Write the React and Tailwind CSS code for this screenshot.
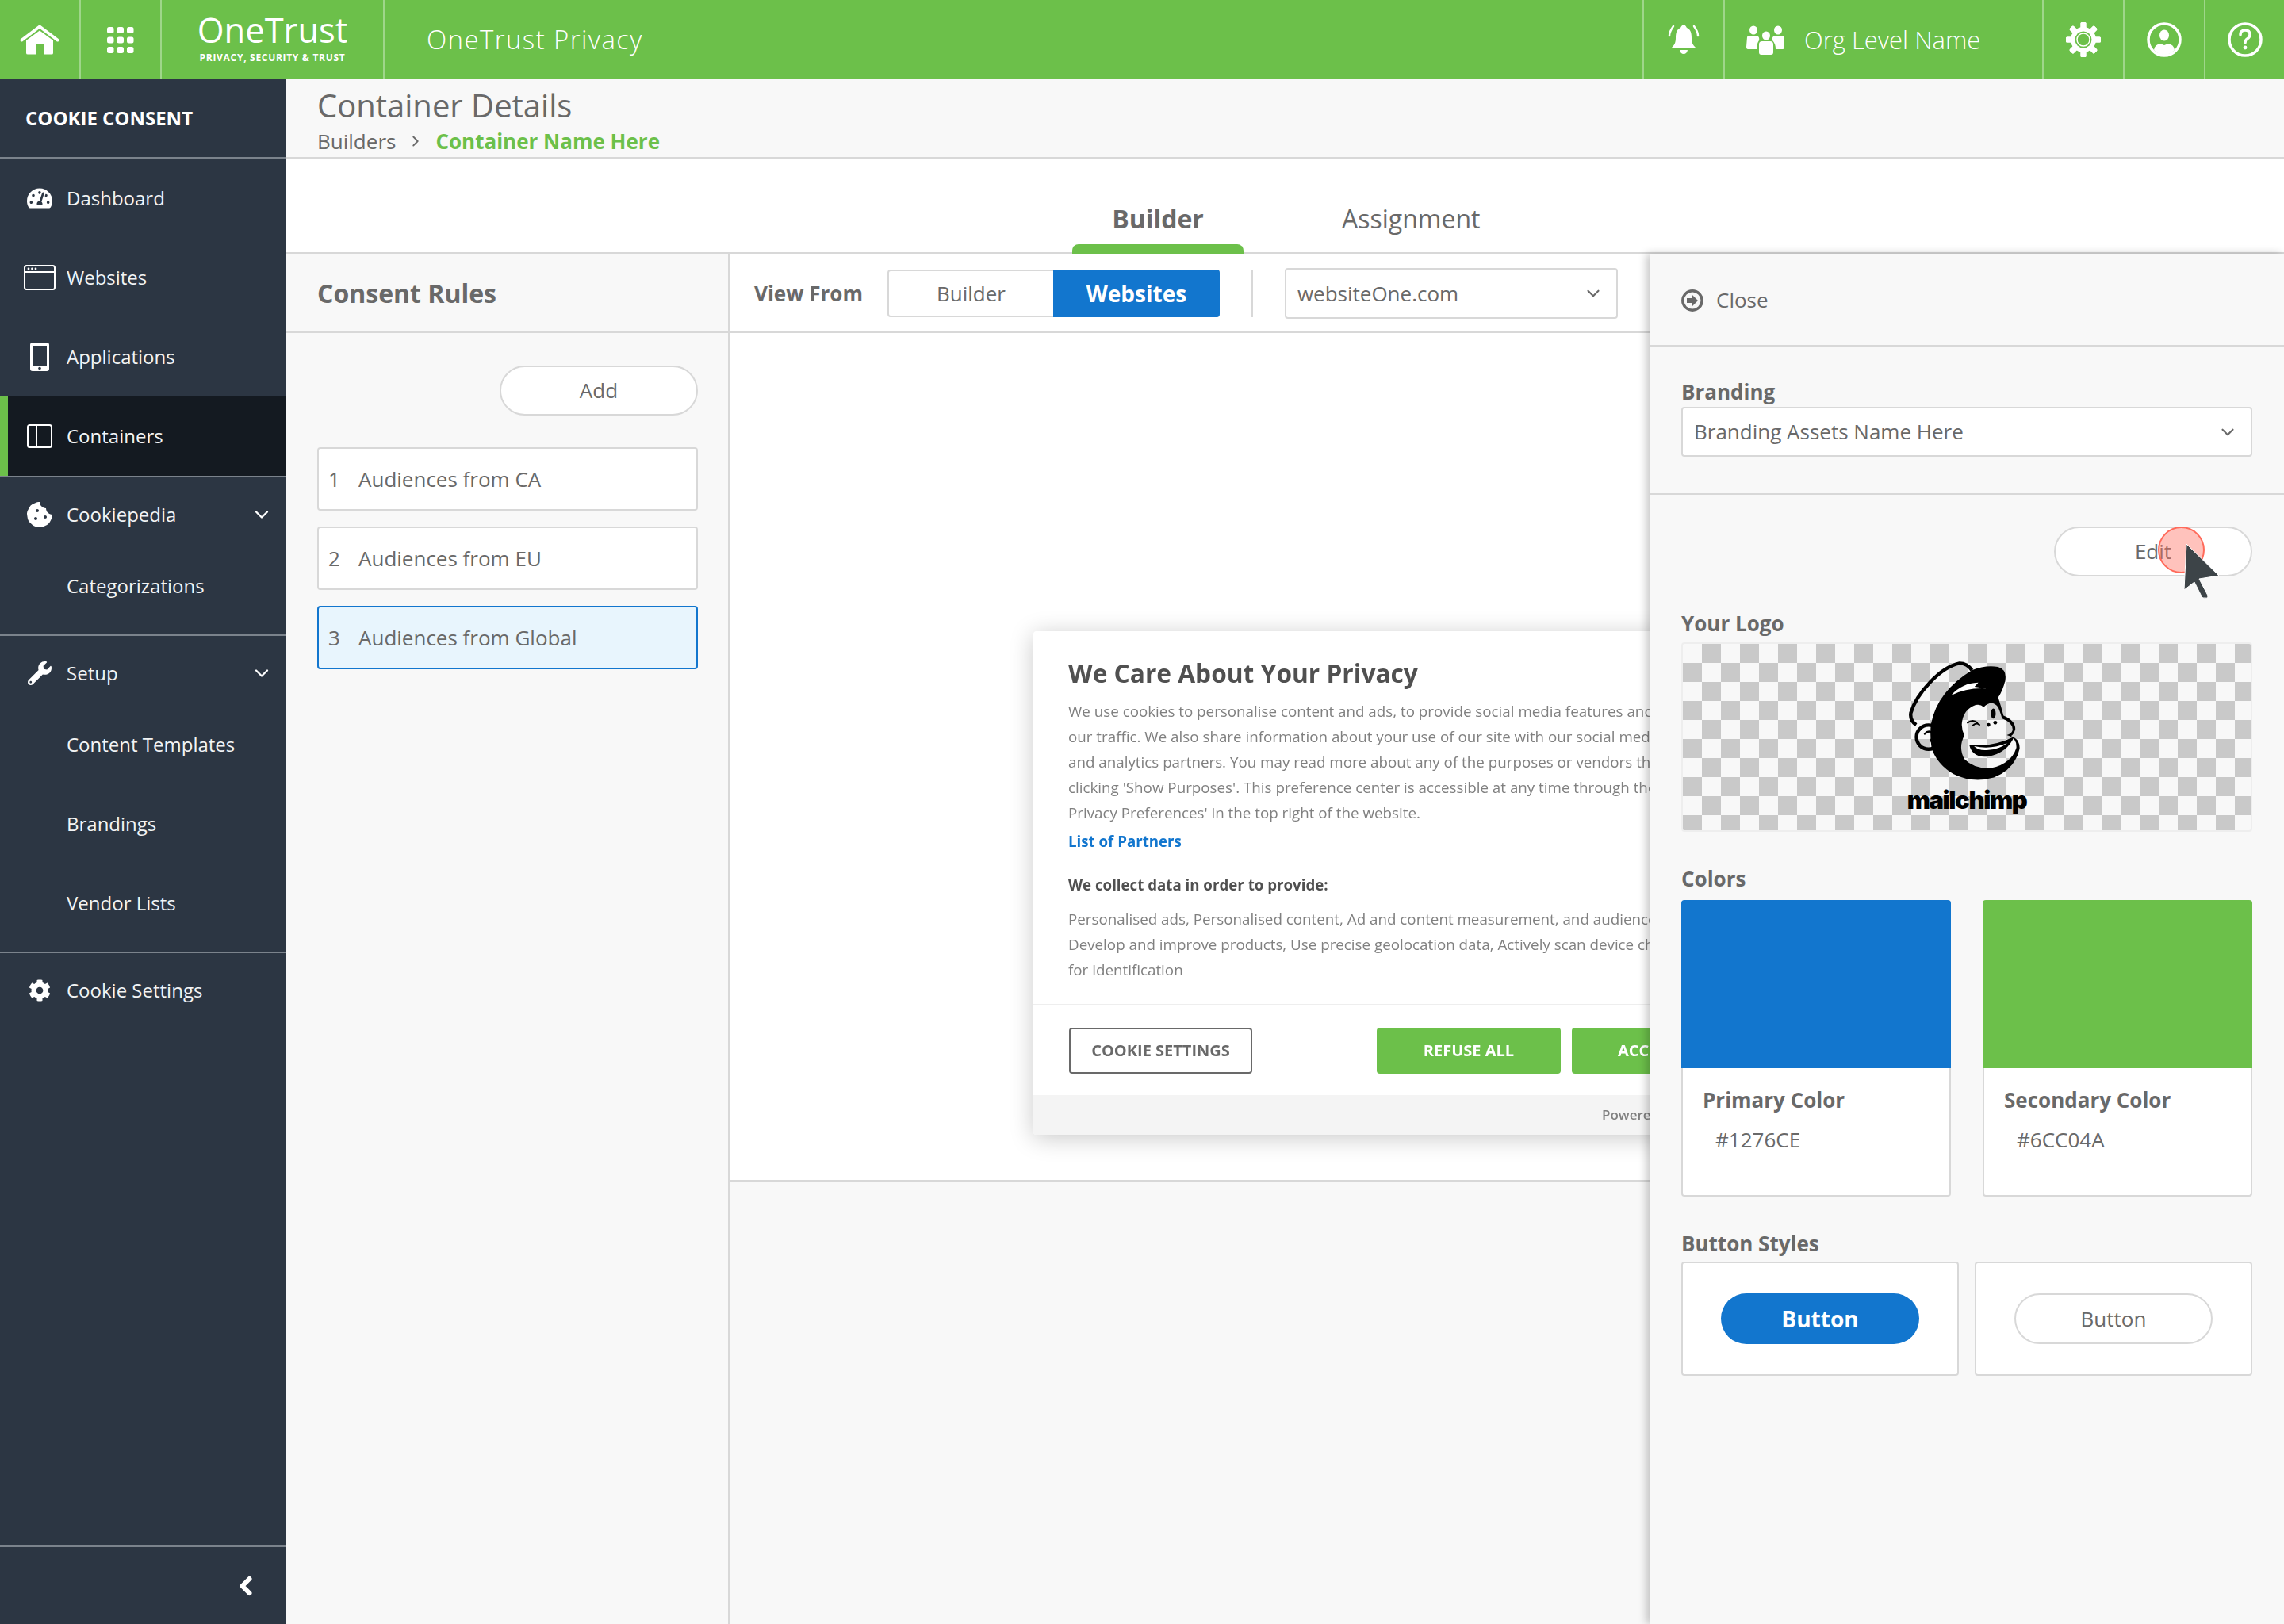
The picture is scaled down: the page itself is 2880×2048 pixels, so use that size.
import React from 'react';
import { ChevronDown, ChevronLeft, ChevronRight } from 'lucide-react';
import { FaTachometerAlt, FaCookieBite, FaWrench, FaCog } from 'react-icons/fa';

const HomeIcon = () => (
  <svg width="50" height="38" viewBox="0 0 50 38" fill="none">
    <path d="M2.5 19.5 L25 2.5 L47.5 19.5" stroke="white" strokeWidth="4" strokeLinecap="round" strokeLinejoin="round" />
    <path d="M8 20 L25 7.5 L42 20 V36 Q42 37.5 40 37.5 H31 V25 H20 V37.5 H10 Q8 37.5 8 36 Z" fill="white" />
  </svg>
);

const GridIcon = () => (
  <svg width="34" height="33" viewBox="0 0 34 33" fill="white">
    {[0, 12.5, 25].map((y) =>
      [0, 12.5, 25].map((x) => <rect key={`${x}-${y}`} x={x} y={y} width="8.5" height="8" rx="2.5" />)
    )}
  </svg>
);

const BellIcon = () => (
  <svg width="42" height="40" viewBox="0 0 42 40" fill="none">
    <path d="M21 1 C24 2 24 4 25 5 C30 7 31 12 31 18 C31 24 33 27 36 30 H6 C9 27 11 24 11 18 C11 12 12 7 17 5 C18 4 18 2 21 1 Z" fill="white" />
    <path d="M16 33 H26 Q25 38 21 38 Q17 38 16 33 Z" fill="white" />
    <path d="M8 3 Q3 10 3 15 M34 3 Q39 10 39 15" stroke="white" strokeWidth="2.5" strokeLinecap="round" />
  </svg>
);

const UsersIcon = () => (
  <svg width="50" height="37" viewBox="0 0 50 37" fill="white">
    <ellipse cx="10" cy="6" rx="5" ry="5.5" />
    <ellipse cx="41" cy="6" rx="5" ry="5.5" />
    <ellipse cx="26" cy="13" rx="5" ry="5.5" />
    <path d="M2 15 Q2 13 6 13 H15 Q18 15 17 19 Q14 23 14 30 H3 Q1 30 1 27 Z" />
    <path d="M49 15 Q49 13 45 13 H36 Q33 15 34 19 Q38 23 38 30 H47 Q49 30 49 27 Z" />
    <path d="M17 24 Q17 20 21 20 H31 Q35 20 35 24 V34 Q35 37 32 37 H20 Q17 37 17 34 Z" />
  </svg>
);

const GearIcon = () => (
  <svg width="44" height="44" viewBox="0 0 44 44">
    {[0, 45, 90, 135, 180, 225, 270, 315].map((a) => (
      <rect key={a} x="18.5" y="0" width="7" height="44" rx="1.5" fill="white" transform={`rotate(${a} 22 22)`} />
    ))}
    <circle cx="22" cy="22" r="16" fill="white" />
    <circle cx="22" cy="22" r="10.5" fill="#6CC04A" />
    <circle cx="22" cy="22" r="8" fill="none" stroke="white" strokeWidth="1.5" />
  </svg>
);

const UserCircleIcon = () => (
  <svg width="44" height="44" viewBox="0 0 44 44" fill="none">
    <circle cx="22" cy="22" r="20" stroke="white" strokeWidth="3.5" />
    <ellipse cx="22" cy="16.5" rx="6" ry="7" fill="white" />
    <path d="M9 35 Q10 28 17 27 L22 29 L27 27 Q34 28 35 35 Q29 41 22 41 Q15 41 9 35 Z" fill="white" />
  </svg>
);

const HelpIcon = () => (
  <svg width="44" height="44" viewBox="0 0 44 44" fill="none">
    <circle cx="22" cy="22" r="20" stroke="white" strokeWidth="3.5" />
    <path d="M16 16 Q16 10 22 10 Q28 10 28 15.5 Q28 19 24.5 21 Q22 22.5 22 26" stroke="white" strokeWidth="3.5" strokeLinecap="round" />
    <circle cx="22" cy="32" r="2.4" fill="white" />
  </svg>
);

const WindowIcon = () => (
  <svg width="40" height="32" viewBox="0 0 40 32" fill="none">
    <rect x="1" y="1" width="38" height="30" rx="2.5" stroke="white" strokeWidth="2" />
    <path d="M1 9 H39" stroke="white" strokeWidth="2" />
    <circle cx="6" cy="5" r="1.4" fill="white" />
    <circle cx="10.5" cy="5" r="1.4" fill="white" />
    <circle cx="15" cy="5" r="1.4" fill="white" />
  </svg>
);

const TabletIcon = () => (
  <svg width="24" height="36" viewBox="0 0 24 36">
    <rect width="24" height="36" rx="3" fill="white" />
    <rect x="3" y="4" width="18" height="25" fill="#2C3643" />
    <circle cx="12" cy="32.5" r="1.8" fill="#2C3643" />
  </svg>
);

const ColumnsIcon = () => (
  <svg width="32" height="30" viewBox="0 0 32 30" fill="none">
    <rect x="1" y="1" width="30" height="28" rx="2.5" stroke="white" strokeWidth="2" />
    <path d="M12 1 V29" stroke="white" strokeWidth="2" />
  </svg>
);

const CloseIcon = () => (
  <svg width="28" height="28" viewBox="0 0 28 28">
    <circle cx="14" cy="14" r="12.2" fill="none" stroke="#696969" strokeWidth="3.5" />
    <path d="M7 11 H13.5 V6.5 L21 14 L13.5 21.5 V17 H7 Z" fill="#696969" />
  </svg>
);

// rough trace of the chimp head, face and brim stay see-through
const ChimpLogo = () => (
  <svg width="142" height="152" viewBox="130 66 420 450">
    <path d="M160 306 Q136 290 140 262 C160 190 250 90 322 76 Q350 76 368 102" fill="none" stroke="black" strokeWidth="13" strokeLinejoin="round" />
    <path
      fillRule="evenodd"
      fill="black"
      d="M368 102 Q420 82 465 90 Q500 100 492 142 Q484 176 466 204 Q478 240 486 272 Q530 290 530 322 Q526 340 514 348 Q548 360 546 395 Q530 470 450 503 Q370 525 300 490 Q240 455 218 395 Q210 345 216 300 Q240 180 368 102 Z
      M332 290 Q340 248 382 232 Q400 228 412 240 Q442 210 466 240 Q478 270 480 282 Q522 298 520 326 Q516 340 498 344 Q536 352 534 392 Q516 448 446 466 Q380 474 340 434 Q316 390 340 346 Q326 316 332 290 Z"
    />
    <path d="M290 196 Q330 150 392 148 L378 164 L422 170 Q350 166 290 196 Z" fill="white" />
    <circle cx="206" cy="352" r="45" fill="none" stroke="black" strokeWidth="13" />
    <path d="M192 340 Q208 322 222 340 Q228 352 216 362 Q214 374 238 372" fill="none" stroke="black" strokeWidth="7" strokeLinecap="round" />
    <ellipse cx="448" cy="264" rx="9" ry="19" fill="black" />
    <path d="M352 298 Q372 284 388 298 M372 308 Q384 296 396 306" fill="none" stroke="black" strokeWidth="6" strokeLinecap="round" />
    <circle cx="430" cy="306" r="7" fill="black" />
    <circle cx="455" cy="298" r="7" fill="black" />
    <path d="M358 380 Q440 392 526 350 Q500 410 430 424 Q370 432 358 380 Z" fill="black" />
    <path d="M376 386 Q440 400 500 374 Q470 398 430 400 Q392 404 376 386 Z" fill="white" />
  </svg>
);

const navTop = [
  { label: 'Dashboard', icon: <FaTachometerAlt size={32} color="white" /> },
  { label: 'Websites', icon: <WindowIcon /> },
  { label: 'Applications', icon: <TabletIcon /> },
];

function NavRow({ icon, label, chevron, active, compact }) {
  return (
    <div className={`flex items-center pr-4 ${compact ? 'h-[94px]' : 'h-[100px]'} ${active ? 'bg-[#141A21] border-l-[10px] border-[#6CC04A]' : ''}`}>
      <div className={`flex justify-center shrink-0 w-[68px] ${active ? 'ml-[6px]' : 'ml-4'}`}>{icon}</div>
      <span className="text-[24px] text-[#f2f4f5]">{label}</span>
      {chevron && <ChevronDown size={28} color="white" strokeWidth={2} className="ml-auto" />}
    </div>
  );
}

function SubItems({ items }) {
  return (
    <div className="flex flex-col gap-[60px] pt-[23px] pb-[41px] pl-[84px]">
      {items.map((item) => (
        <div key={item} className="h-10 leading-10 text-[24px] text-[#f2f4f5]">{item}</div>
      ))}
    </div>
  );
}

function Sidebar() {
  return (
    <aside className="w-[360px] shrink-0 bg-[#2C3643] flex flex-col">
      <div className="h-[100px] shrink-0 flex items-center pl-8 border-b-2 border-[#7b838c] text-[24px] font-bold text-white">COOKIE CONSENT</div>
      {navTop.map((n) => (
        <NavRow key={n.label} icon={n.icon} label={n.label} />
      ))}
      <NavRow active icon={<ColumnsIcon />} label="Containers" />
      <div className="border-t-2 border-[#7b838c]">
        <NavRow compact chevron icon={<FaCookieBite size={32} color="white" />} label="Cookiepedia" />
        <SubItems items={['Categorizations']} />
      </div>
      <div className="border-t-2 border-[#7b838c]">
        <NavRow compact chevron icon={<FaWrench size={30} color="white" />} label="Setup" />
        <SubItems items={['Content Templates', 'Brandings', 'Vendor Lists']} />
      </div>
      <div className="border-t-2 border-[#7b838c]">
        <NavRow compact icon={<FaCog size={28} color="white" />} label="Cookie Settings" />
      </div>
      <div className="mt-auto h-[99px] border-t-2 border-[#7b838c] flex items-center justify-end pr-[32px]">
        <ChevronLeft size={36} color="white" strokeWidth={4} />
      </div>
    </aside>
  );
}

function TopBar() {
  return (
    <header className="h-[100px] shrink-0 bg-[#6CC04A] flex items-stretch text-white">
      <div className="w-[102px] border-r-2 border-[#9fd68a] flex items-center justify-center"><HomeIcon /></div>
      <div className="w-[102px] border-r-2 border-[#9fd68a] flex items-center justify-center"><GridIcon /></div>
      <div className="w-[281px] border-r-2 border-[#9fd68a] flex flex-col items-center pt-[13px]">
        <div className="text-[43.5px] leading-[50px]">OneTrust</div>
        <div className="text-[12px] leading-4 font-bold mt-[2px] tracking-[0.7px]">PRIVACY, SECURITY &amp; TRUST</div>
      </div>
      <div className="pl-[53px] flex items-center text-[33px] tracking-[1.4px] font-light">OneTrust Privacy</div>
      <div className="ml-auto w-[102px] border-l-2 border-[#9fd68a] flex items-center justify-center"><BellIcon /></div>
      <div className="w-[402px] border-l-2 border-[#9fd68a] flex items-center pl-[26px]">
        <UsersIcon />
        <span className="ml-[24px] text-[31px] font-light">Org Level Name</span>
      </div>
      <div className="w-[102px] border-l-2 border-[#9fd68a] flex items-center justify-center"><GearIcon /></div>
      <div className="w-[102px] border-l-2 border-[#9fd68a] flex items-center justify-center"><UserCircleIcon /></div>
      <div className="w-[101px] border-l-2 border-[#9fd68a] flex items-center justify-center"><HelpIcon /></div>
    </header>
  );
}

function RuleRow({ n, label, selected }) {
  return (
    <div className={`h-[80px] rounded border-2 flex items-center pl-3 text-[26px] text-[#696969] ${selected ? 'bg-[#E8F5FD] border-[#1276CE]' : 'bg-white border-[#d8d8d8]'}`}>
      <span className="w-[38px]">{n}</span>
      <span>{label}</span>
    </div>
  );
}

function CookieBanner() {
  const intro = [
    'We use cookies to personalise content and ads, to provide social media features and',
    'our traffic. We also share information about your use of our site with our social media',
    'and analytics partners. You may read more about any of the purposes or vendors that',
    "clicking 'Show Purposes'. This preference center is accessible at any time through the",
    "Privacy Preferences' in the top right of the website.",
  ];
  const purposes = [
    'Personalised ads, Personalised content, Ad and content measurement, and audience',
    'Develop and improve products, Use precise geolocation data, Actively scan device characteristics',
    'for identification',
  ];
  return (
    <div className="w-[1000px] h-[635px] shrink-0 bg-white rounded shadow-[0_4px_30px_rgba(0,0,0,0.22)] flex flex-col overflow-hidden blur-[0.4px]">
      <div className="pl-11 pt-[32px] h-[471px] border-b border-[#eeeeee]">
        <div className="text-[31.7px] leading-[42px] font-bold text-[#505050] whitespace-nowrap">We Care About Your Privacy</div>
        <div className="mt-[11px] text-[18.8px] leading-[32px] text-[#808080] whitespace-nowrap">
          {intro.map((l) => <div key={l}>{l}</div>)}
        </div>
        <div className="mt-[4px] text-[18.7px] leading-[32px] font-bold text-[#1276CE]">List of Partners</div>
        <div className="mt-[23px] text-[18.7px] leading-[32px] font-bold text-[#505050]">We collect data in order to provide:</div>
        <div className="mt-[11px] text-[18.8px] leading-[32px] text-[#808080] whitespace-nowrap">
          {purposes.map((l) => <div key={l}>{l}</div>)}
        </div>
      </div>
      <div className="flex-1 flex items-center pl-[45px] pt-[2px] gap-[14px]">
        <div className="w-[231px] h-[58px] rounded border-2 border-[#696969] flex items-center justify-center text-[20px] font-bold text-[#696969] mr-[143px]">COOKIE SETTINGS</div>
        <div className="w-[232px] h-[58px] rounded bg-[#6CC04A] flex items-center justify-center text-[20px] font-bold text-white">REFUSE ALL</div>
        <div className="w-[232px] h-[58px] rounded bg-[#6CC04A] flex items-center justify-center text-[20px] font-bold text-white">ACCEPT ALL</div>
      </div>
      <div className="h-[50px] shrink-0 bg-[#f4f4f4] flex items-center pl-[717px] text-[17px] font-semibold text-[#808080] whitespace-nowrap">Powered by OneTrust</div>
    </div>
  );
}

function SelectBox({ value, className }) {
  return (
    <div className={`bg-white border-2 border-[#d8d8d8] rounded flex items-center justify-between pl-[14px] pr-[16px] text-[26px] text-[#696969] ${className}`}>
      <span>{value}</span>
      <ChevronDown size={26} color="#696969" strokeWidth={2} />
    </div>
  );
}

function ColorCard({ name, hex, swatch }) {
  return (
    <div className="w-[340px] h-[374px] flex flex-col">
      <div className={`h-[212px] shrink-0 rounded-t ${swatch}`}></div>
      <div className="flex-1 bg-white border-2 border-t-0 border-[#d8d8d8] rounded-b">
        <div className="pl-[25px] pt-[22px] text-[26px] leading-9 font-bold text-[#696969]">{name}</div>
        <div className="pl-[41px] pt-[14px] text-[26px] leading-9 text-[#696969]">{hex}</div>
      </div>
    </div>
  );
}

function BrandingPanel() {
  return (
    <aside className="w-[800px] shrink-0 bg-[#F8F8F8] shadow-[-4px_0_10px_rgba(0,0,0,0.22)] relative z-10">
      <div className="h-[117px] border-b-2 border-[#d8d8d8] flex items-center pl-10 pt-[2px] gap-[16px] text-[26px] text-[#696969]">
        <CloseIcon />
        <span>Close</span>
      </div>
      <div className="h-[187px] border-b-2 border-[#d8d8d8] px-10 pt-[39px]">
        <div className="text-[26px] leading-9 font-bold text-[#696969]">Branding</div>
        <SelectBox value="Branding Assets Name Here" className="h-[63px] mt-[1px]" />
      </div>
      <div className="px-10 pt-[40px]">
        <div className="flex justify-end">
          <div className="relative w-[250px] h-[63px] rounded-full bg-white border-2 border-[#d8d8d8] flex items-center justify-center text-[26px] text-[#696969]">
            Edit
            <div className="absolute left-[129px] -top-[2px] w-[59px] h-[59px] rounded-full bg-[rgba(255,110,95,0.42)] border-2 border-[#ff6a5a]"></div>
            <svg className="absolute left-[161px] top-[18px]" width="48" height="72" viewBox="0 0 48 72">
              <path d="M4 2 L45 42 L20 46 L31 67 Q31 71 28 70 Q24 71 23 68 L14 50 L1 60 Z" fill="#3D4448" stroke="white" strokeWidth="1" strokeLinejoin="round" />
            </svg>
          </div>
        </div>
        <div className="mt-[41px] text-[26px] leading-9 font-bold text-[#696969]">Your Logo</div>
        <div className="mt-[6px] h-[239px] rounded border-2 border-[#eeeeee] bg-[repeating-conic-gradient(#c9c9c9_0_25%,#f8f8f8_0_50%)] bg-size-[48px_48px] flex flex-col items-center pt-[21px]">
          <div className="mr-[6px] h-[152px]"><ChimpLogo /></div>
          <div className="mt-[6px] text-[31px] leading-[36px] font-black tracking-[-1.4px] text-black font-['Inter',sans-serif]">mailchimp</div>
        </div>
        <div className="mt-[41px] text-[26px] leading-9 font-bold text-[#696969]">Colors</div>
        <div className="mt-[9px] flex justify-between">
          <ColorCard name="Primary Color" hex="#1276CE" swatch="bg-[#1276CE]" />
          <ColorCard name="Secondary Color" hex="#6CC04A" swatch="bg-[#6CC04A]" />
        </div>
        <div className="mt-[41px] text-[26px] leading-9 font-bold text-[#696969]">Button Styles</div>
        <div className="mt-[5px] flex justify-between">
          <div className="w-[350px] h-[144px] bg-white border-2 border-[#d8d8d8] rounded flex items-center justify-center">
            <div className="w-[250px] h-[64px] rounded-full bg-[#1276CE] flex items-center justify-center text-[28px] font-bold text-white">Button</div>
          </div>
          <div className="w-[350px] h-[144px] bg-white border-2 border-[#d8d8d8] rounded flex items-center justify-center">
            <div className="w-[250px] h-[64px] rounded-full border-2 border-[#d8d8d8] flex items-center justify-center text-[26px] text-[#696969]">Button</div>
          </div>
        </div>
      </div>
    </aside>
  );
}

export default function App() {
  return (
    <div className="h-screen w-screen overflow-hidden flex flex-col font-['Open_Sans',sans-serif]">
      <TopBar />
      <div className="flex-1 flex min-h-0">
        <Sidebar />
        <main className="flex-1 flex flex-col min-w-0 bg-[#F8F8F8]">
          <div className="h-[100px] shrink-0 bg-[#F8F8F8] border-b-2 border-[#d8d8d8] pl-10">
            <div className="text-[40px] leading-[50px] text-[#696969] pt-[8px] h-[58px]">Container Details</div>
            <div className="flex items-center text-[26px] leading-8 text-[#696969] mt-[4px]">
              <span>Builders</span>
              <ChevronRight size={22} className="mx-[14px]" />
              <span className="font-bold text-[#6CC04A]">Container Name Here</span>
            </div>
          </div>
          <div className="h-[120px] shrink-0 bg-white border-b-2 border-[#d8d8d8] flex items-stretch pl-[992px]">
            <div className="w-[216px] flex flex-col justify-end items-center -mb-[2px]">
              <span className="text-[32px] font-bold text-[#696969] mb-[8px]">Builder</span>
              <div className="w-full h-3 bg-[#6CC04A] rounded-t-lg"></div>
            </div>
            <div className="ml-[124px] flex items-end pb-[18px] text-[32px] text-[#696969]">Assignment</div>
          </div>
          <div className="flex-1 flex min-h-0">
            <section className="w-[558px] shrink-0">
              <div className="h-[100px] border-b-2 border-[#d8d8d8] flex items-center pl-10 pt-[2px] text-[32px] font-bold text-[#696969]">Consent Rules</div>
              <div className="pl-10 pr-[38px] pt-[41px]">
                <div className="flex justify-end">
                  <div className="w-[250px] h-[63px] rounded-full bg-white border-2 border-[#d8d8d8] flex items-center justify-center text-[26px] text-[#696969]">Add</div>
                </div>
                <div className="mt-10 flex flex-col gap-5">
                  <RuleRow n="1" label="Audiences from CA" />
                  <RuleRow n="2" label="Audiences from EU" />
                  <RuleRow n="3" label="Audiences from Global" selected />
                </div>
              </div>
            </section>
            <section className="flex-1 min-w-0 border-l-2 border-[#d8d8d8] flex flex-col overflow-hidden">
              <div className="h-[100px] shrink-0 bg-white border-b-2 border-[#d8d8d8] flex items-center pl-[31px] pt-[2px]">
                <span className="text-[26px] font-bold text-[#696969]">View From</span>
                <div className="ml-[31px] w-[419px] h-[60px] flex rounded border-2 border-[#d8d8d8] text-[26px]">
                  <div className="w-[207px] flex items-center justify-center text-[#696969]">Builder</div>
                  <div className="flex-1 -my-[2px] -mr-[2px] rounded-r flex items-center justify-center bg-[#1276CE] text-white text-[28px] font-bold">Websites</div>
                </div>
                <div className="ml-[40px] w-[2px] h-[60px] bg-[#d8d8d8]"></div>
                <SelectBox value="websiteOne.com" className="ml-[40px] w-[420px] h-[64px]" />
              </div>
              <div className="h-[1070px] shrink-0 bg-white border-b-2 border-[#d8d8d8] pl-[383px] pt-[376px] flex items-start overflow-hidden">
                <CookieBanner />
              </div>
            </section>
            <BrandingPanel />
          </div>
        </main>
      </div>
    </div>
  );
}
